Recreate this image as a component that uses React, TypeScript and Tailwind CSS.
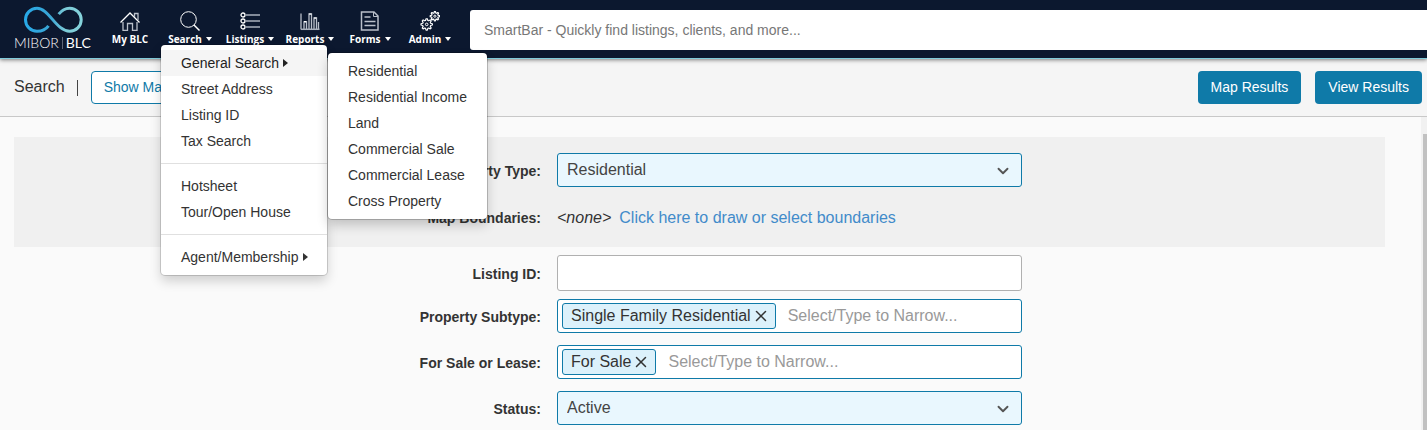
import React, { useState } from 'react';
import { ChevronDown, X } from 'lucide-react';

interface NavItem {
  label: string;
  icon: React.ReactNode;
  caret?: boolean;
}

interface MenuEntry {
  label: string;
  submenu?: string[];
}

const HomeIcon = () => (
  <>
    <path d="M.5 11.500 10 2l9.500 9.500" stroke="#fff" strokeWidth="1.300" />
    <path d="M3 11v8.500h4.500v-7h5v7H17V11M14.500 6V2.500H18V9" stroke="#b9bfca" strokeWidth="1.300" />
  </>
);

const SearchIcon = () => (
  <>
    <circle cx="8.500" cy="8.500" r="7.800" />
    <path d="m14 14 5.500 5.500" strokeWidth="1.500" />
  </>
);

const ListIcon = () => (
  <>
    <circle cx="3" cy="4" r="2" strokeWidth="1.300" />
    <circle cx="3" cy="10" r="2" strokeWidth="1.300" />
    <circle cx="3" cy="16" r="2" strokeWidth="1.300" />
    <path d="M6 4h14M6 10h14M6 16h14" stroke="#a9b0bd" strokeWidth="1.500" />
  </>
);

const ChartIcon = () => (
  <>
    <path
      d="M1 2.500v16M4 18v-7h2.500v7M9 18V3h2.500v15M14 18V7h2.500v11M18.500 18v-7"
      stroke="#b9bfca"
      strokeWidth="1.300"
    />
    <path d="M1 18.300h18.500" stroke="#a9b0bd" strokeWidth="1.500" />
    <path d="M4 10.500h2.500M9 3h2.500M14 7h2.500" />
  </>
);

const FormIcon = () => (
  <>
    <path d="M1.500 1h12.500l4 4v14h-16.500z" stroke="#b9bfca" strokeWidth="1.500" />
    <path d="M13.500 1v4.500h4.500" stroke="#b9bfca" />
    <path d="M4.500 6h6M4.500 10.500h11M4.500 14.500h11" stroke="#b9bfca" strokeWidth="1.500" />
  </>
);

const gearPath = (cx: number, cy: number, inner: number, outer: number, teeth: number) => {
  const step = Math.PI / teeth;
  const points: string[] = [];
  for (let i = 0; i < teeth * 2; i++) {
    const r = i % 2 === 0 ? outer : inner;
    [-0.28, 0.28].forEach((offset) => {
      const angle = (i + offset) * step;
      points.push(`${(cx + r * Math.cos(angle)).toFixed(2)} ${(cy + r * Math.sin(angle)).toFixed(2)}`);
    });
  }
  return `M${points.join('L')}Z`;
};

const GearsIcon = () => (
  <>
    <path d={gearPath(6.7, 13.4, 4.1, 5.7, 8)} strokeWidth="1.200" strokeLinejoin="round" />
    <circle cx="6.700" cy="13.400" r="1.300" />
    <path d={gearPath(14.9, 5.2, 3.3, 4.7, 8)} strokeWidth="1.200" strokeLinejoin="round" />
    <circle cx="14.900" cy="5.200" r="1.100" />
  </>
);

const navItems: NavItem[] = [
  { label: 'My BLC', icon: <HomeIcon /> },
  { label: 'Search', icon: <SearchIcon />, caret: true },
  { label: 'Listings', icon: <ListIcon />, caret: true },
  { label: 'Reports', icon: <ChartIcon />, caret: true },
  { label: 'Forms', icon: <FormIcon />, caret: true },
  { label: 'Admin', icon: <GearsIcon />, caret: true }
];

const searchMenu: MenuEntry[][] = [
  [
    {
      label: 'General Search',
      submenu: [
        'Residential',
        'Residential Income',
        'Land',
        'Commercial Sale',
        'Commercial Lease',
        'Cross Property'
      ]
    },
    { label: 'Street Address' },
    { label: 'Listing ID' },
    { label: 'Tax Search' }
  ],
  [{ label: 'Hotsheet' }, { label: 'Tour/Open House' }],
  [{ label: 'Agent/Membership', submenu: [] }]
];

const Logo = () => (
  <a href="#" aria-label="MIBOR BLC" className="flex w-[86px] shrink-0 flex-col items-start pt-1 text-white">
    <svg viewBox="23 4 62 31" className="ml-[9px] h-[31px] w-[62px]" fill="none">
      <defs>
        <linearGradient id="loop" x1="24" y1="0" x2="83" y2="0" gradientUnits="userSpaceOnUse">
          <stop offset="0" stopColor="#27a9e8" />
          <stop offset="0.450" stopColor="#3aa5d4" />
          <stop offset="0.700" stopColor="#7ccbd8" />
          <stop offset="1" stopColor="#86d3dc" />
        </linearGradient>
      </defs>
      <path
        d="M48.500 25.800C46 29.300 42 31.200 37 31.200A11.500 11.500 0 0 1 37 8.200C49 8.200 56 31.200 69.700 31.200A11.500 11.500 0 0 0 69.700 8.200C65 8.200 61.500 10.500 58.700 14.200"
        stroke="url(#loop)"
        strokeWidth="3"
      />
    </svg>
    <span className="flex items-center font-['Lato',sans-serif] text-sm leading-4">
      <span className="font-light">MIBOR</span>
      <span className="mx-[3px] h-3 w-px bg-[#5d6678]" />
      <span>BLC</span>
    </span>
  </a>
);

const SearchMenu = () => (
  <div className="absolute top-[45px] left-px z-20 w-[166px] rounded-[4px] bg-white py-[5px] font-['Liberation_Sans',sans-serif] text-sm text-[#333] shadow-[0_0_0_1px_rgba(0,0,0,0.15),0_6px_12px_rgba(0,0,0,0.175)]">
    {searchMenu.map((group, index) => (
      <ul key={index} className={index > 0 ? 'mt-[9px] border-t border-[#e0e0e0] pt-[9px]' : ''}>
        {group.map((entry) => (
          <li key={entry.label} className="relative">
            <a
              href="#"
              className={`flex h-[26px] items-center gap-1 pl-5 whitespace-nowrap ${
                entry.label === 'General Search' ? 'bg-[#f5f5f5] text-[#222]' : ''
              }`}
            >
              {entry.label}
              {entry.submenu && (
                <svg viewBox="0 0 5 8" className="h-2 w-[5px]" fill="currentColor">
                  <path d="M0 0l5 4-5 4z" />
                </svg>
              )}
            </a>
            {entry.submenu && entry.submenu.length > 0 && (
              <ul className="absolute top-[3px] left-[167px] w-[159px] rounded-[4px] bg-white py-[5px] shadow-[0_0_0_1px_rgba(0,0,0,0.2),0_6px_12px_rgba(0,0,0,0.2)]">
                {entry.submenu.map((item) => (
                  <li key={item}>
                    <a href="#" className="flex h-[26px] items-center pl-5 whitespace-nowrap">
                      {item}
                    </a>
                  </li>
                ))}
              </ul>
            )}
          </li>
        ))}
      </ul>
    ))}
  </div>
);

const Header = () => (
  <header className="relative z-10 flex h-[59px] border-b border-[#80cbdb] bg-[#0c182f] pl-[14px] shadow-[0_1px_4px_rgba(0,0,0,0.5)]">
    <Logo />
    <nav className="flex shrink-0">
      {navItems.map((item) => (
        <div key={item.label} className="relative w-[60px]">
          <button
            type="button"
            className="flex w-full flex-col items-center pt-[11px] font-['Open_Sans',sans-serif] text-[10px] leading-4 font-bold whitespace-nowrap text-white"
          >
            <svg viewBox="0 0 20 20" className="h-5 w-5" fill="none" stroke="#fff" strokeWidth="1">
              {item.icon}
            </svg>
            <span className="flex items-center gap-1">
              {item.label}
              {item.caret && (
                <svg viewBox="0 0 6 4" className="h-1 w-1.5 shrink-0" fill="currentColor">
                  <path d="M0 0h6L3 4z" />
                </svg>
              )}
            </span>
          </button>
          {item.label === 'Search' && <SearchMenu />}
        </div>
      ))}
    </nav>
    <input
      type="text"
      aria-label="SmartBar"
      placeholder="SmartBar - Quickly find listings, clients, and more..."
      className="mt-[10px] ml-[10px] h-10 min-w-0 flex-1 rounded-l-[3px] bg-white px-[14px] text-sm placeholder:text-[#777]"
    />
  </header>
);

const Toolbar = () => (
  <div className="flex h-[58px] items-center border-b border-[#c8c8c8] bg-[#f5f5f5] pr-[5px] pl-[14px] text-sm">
    <h1 className="pb-0.5 text-base text-[#333]">Search</h1>
    <span className="mr-[13px] ml-3 h-4 w-px bg-[#444]" />
    <button type="button" className="h-[33px] rounded-[4px] border border-[#0f7aa8] bg-white px-3 pb-0.5 text-[#0f7aa8]">
      Show Map
    </button>
    <div className="ml-auto flex gap-[14px]">
      <button type="button" className="h-[33px] rounded-[4px] bg-[#0f7aa8] px-[13px] pb-0.5 text-white">
        Map Results
      </button>
      <button type="button" className="h-[33px] rounded-[4px] bg-[#0f7aa8] px-[13px] pb-0.5 text-white">
        View Results
      </button>
    </div>
  </div>
);

interface FormRowProps {
  label: string;
  id: string;
  children: React.ReactNode;
}

const FormRow = ({ label, id, children }: FormRowProps) => (
  <div className="grid grid-cols-[527fr_465fr_347fr] items-center gap-4">
    <label htmlFor={id} className="pt-0.5 text-right text-sm leading-5 font-bold text-[#333]">
      {label}:
    </label>
    {children}
  </div>
);

interface TagFieldProps {
  id: string;
  initial: string[];
}

const TagField = ({ id, initial }: TagFieldProps) => {
  const [tags, setTags] = useState(initial);

  return (
    <div className="flex h-[34px] items-center gap-1 rounded-[3px] border border-[#0f7aa8] bg-white px-1">
      {tags.map((tag) => (
        <span
          key={tag}
          className="flex h-[26px] shrink-0 items-center rounded-[3px] border border-[#0f7aa8] bg-[#dcf1fb] pr-[5px] pl-2 text-[#333]"
        >
          {tag}
          <button
            type="button"
            aria-label={`Remove ${tag}`}
            className="ml-px"
            onClick={() => setTags(tags.filter((t) => t !== tag))}
          >
            <X className="h-[18px] w-[18px]" strokeWidth={2} />
          </button>
        </span>
      ))}
      <input
        id={id}
        type="text"
        placeholder="Select/Type to Narrow..."
        className="min-w-0 flex-1 bg-transparent px-2 outline-none placeholder:text-[#999]"
      />
    </div>
  );
};

interface SelectFieldProps {
  id: string;
  options: string[];
}

const SelectField = ({ id, options }: SelectFieldProps) => (
  <div className="relative">
    <select
      id={id}
      className="block h-[34px] w-full appearance-none rounded-[3px] border border-[#0f7aa8] bg-[#e9f7fe] px-[9px] text-[#444]"
    >
      {options.map((option) => (
        <option key={option}>{option}</option>
      ))}
    </select>
    <ChevronDown className="pointer-events-none absolute top-[9px] right-2.5 h-[18px] w-[18px] text-[#555]" strokeWidth={2.5} />
  </div>
);

const App = () => {
  return (
    <div className="flex min-h-screen flex-col bg-[#fafafa] font-['Liberation_Sans',Arial,sans-serif] text-base">
      <Header />
      <Toolbar />

      <div className="flex flex-1">
        <main className="min-w-0 flex-1 pt-5 pr-9 pl-[14px]">
          {/* Location */}
          <section className="flex flex-col gap-[14px] bg-[#f0f0f0] pt-4 pb-[14px]">
            <FormRow label="Property Type" id="property-type">
              <SelectField id="property-type" options={['Residential', 'Residential Income', 'Land']} />
            </FormRow>
            <FormRow label="Map Boundaries" id="map-boundaries">
              <div className="flex h-8 items-center gap-2 pt-0.5 whitespace-nowrap">
                <em className="text-[#333]">&lt;none&gt;</em>
                <a id="map-boundaries" href="#" className="text-[#428bca]">
                  Click here to draw or select boundaries
                </a>
              </div>
            </FormRow>
          </section>

          {/* Criteria */}
          <section className="flex flex-col gap-3 pt-2">
            <div className="-mb-1">
              <FormRow label="Listing ID" id="listing-id">
                <input
                  id="listing-id"
                  type="text"
                  className="h-9 w-full rounded-[3px] border border-[#b0b0b0] bg-white px-2"
                />
              </FormRow>
            </div>
            <FormRow label="Property Subtype" id="property-subtype">
              <TagField id="property-subtype" initial={['Single Family Residential']} />
            </FormRow>
            <FormRow label="For Sale or Lease" id="sale-or-lease">
              <TagField id="sale-or-lease" initial={['For Sale']} />
            </FormRow>
            <FormRow label="Status" id="status">
              <SelectField id="status" options={['Active', 'Pending', 'Sold']} />
            </FormRow>
          </section>
        </main>

        {/* Scroll track */}
        <div className="flex w-1.5 flex-col bg-[#f1f1f1] pt-[17px] pl-0.5">
          <div className="flex-1 bg-[#c1c1c1]" />
        </div>
      </div>
    </div>
  );
};

export default App;
